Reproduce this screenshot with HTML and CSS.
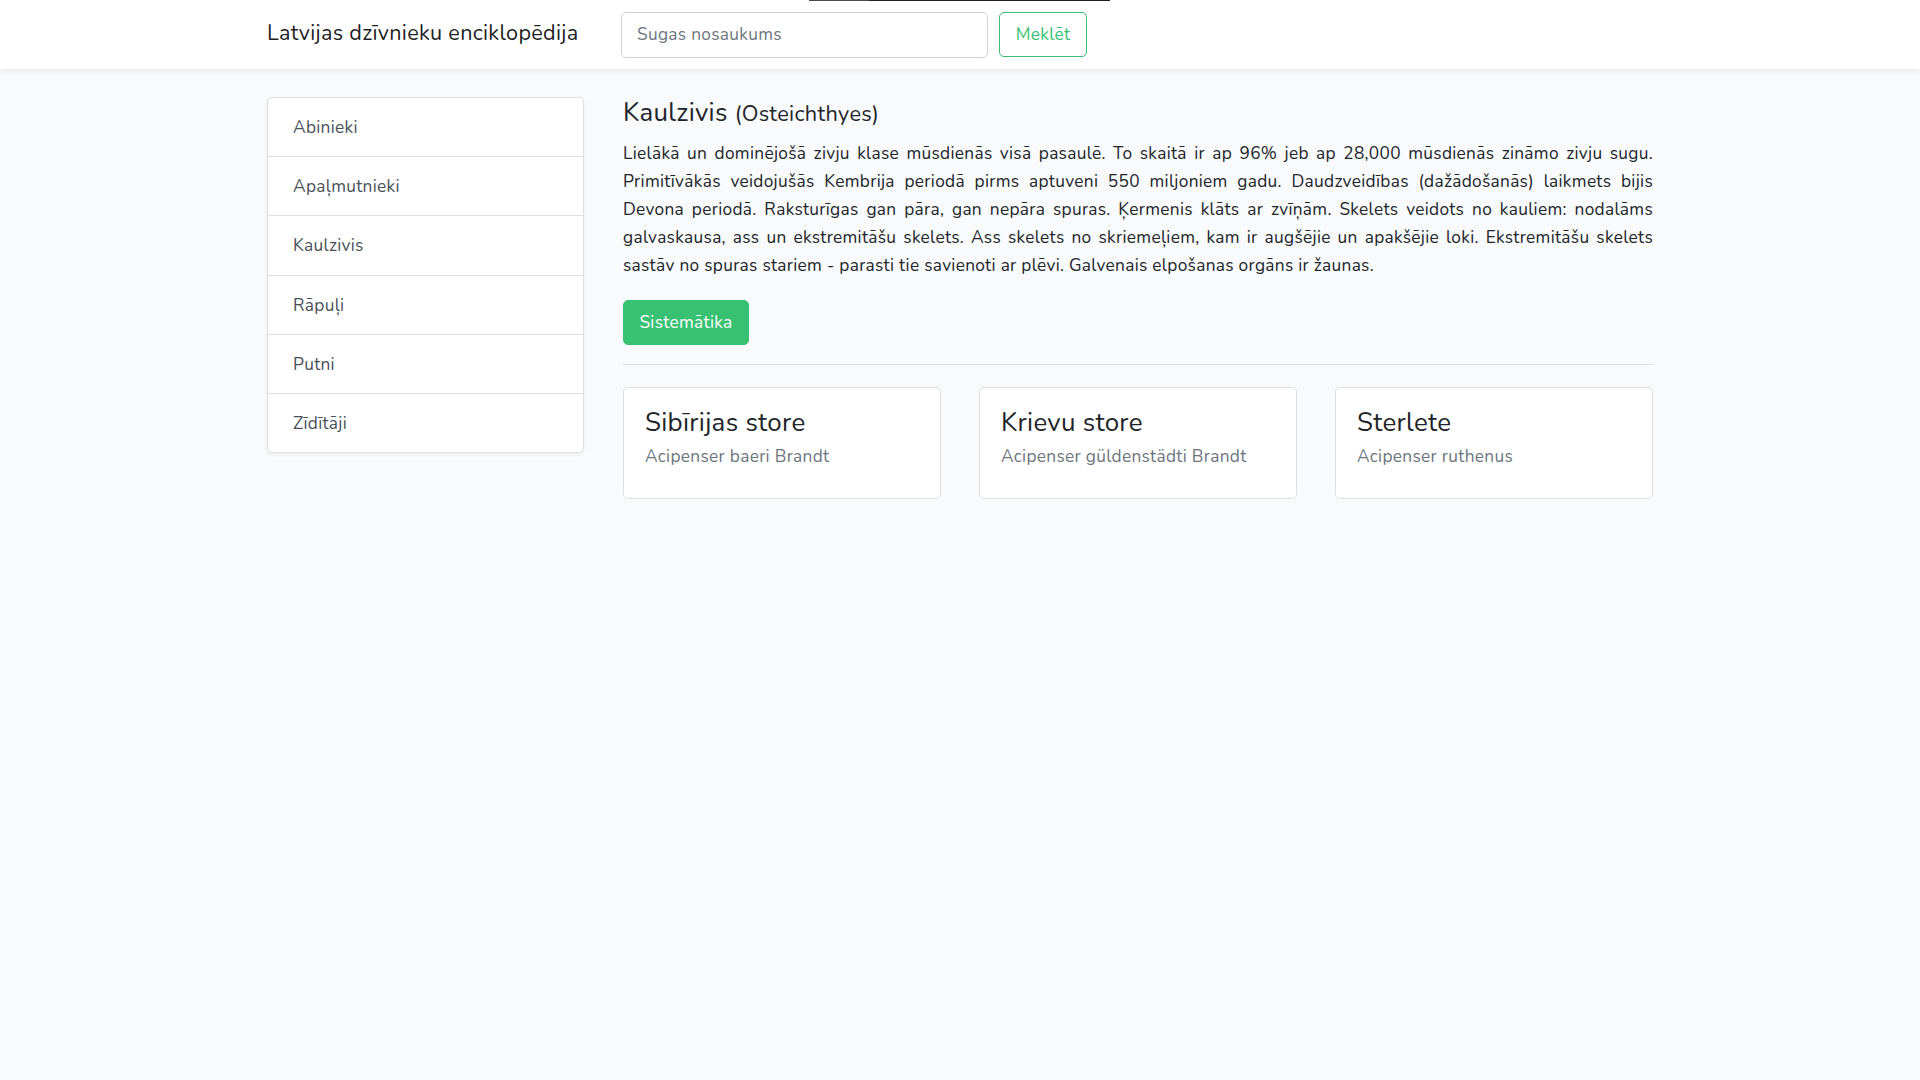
FILE: index.html
```html
<!DOCTYPE html>
<html lang="lv">
<head>
<meta charset="utf-8">
<title>Latvijas dzīvnieku enciklopēdija</title>
<link rel="stylesheet" href="styles.css">
</head>
<body>
<div class="topline"><span class="topline-a"></span><span class="topline-b"></span></div>
<nav class="navbar">
  <div class="nav-inner">
    <a class="brand" href="#">Latvijas dzīvnieku enciklopēdija</a>
    <form class="search">
      <input class="search-input" type="text" placeholder="Sugas nosaukums">
      <button class="btn-outline" type="button">Meklēt</button>
    </form>
  </div>
</nav>
<main class="container">
  <aside class="side-card">
    <a class="side-item" href="#">Abinieki</a>
    <a class="side-item" href="#">Apaļmutnieki</a>
    <a class="side-item" href="#">Kaulzivis</a>
    <a class="side-item" href="#">Rāpuļi</a>
    <a class="side-item" href="#">Putni</a>
    <a class="side-item" href="#">Zīdītāji</a>
  </aside>
  <section class="content">
    <h4 class="title">Kaulzivis <small class="latin">(Osteichthyes)</small></h4>
    <p class="desc">Lielākā un dominējošā zivju klase mūsdienās visā pasaulē. To skaitā ir ap 96% jeb ap 28,000 mūsdienās zināmo zivju sugu. Primitīvākās veidojušās Kembrija periodā pirms aptuveni 550 miljoniem gadu. Daudzveidības (dažādošanās) laikmets bijis Devona periodā. Raksturīgas gan pāra, gan nepāra spuras. Ķermenis klāts ar zvīņām. Skelets veidots no kauliem: nodalāms galvaskausa, ass un ekstremitāšu skelets. Ass skelets no skriemeļiem, kam ir augšējie un apakšējie loki. Ekstremitāšu skelets sastāv no spuras stariem - parasti tie savienoti ar plēvi. Galvenais elpošanas orgāns ir žaunas.</p>
    <a class="btn-success" href="#">Sistemātika</a>
    <hr class="divider">
    <div class="species">
      <div class="sp-card">
        <h4 class="sp-name">Sibīrijas store</h4>
        <p class="sp-latin">Acipenser baeri Brandt</p>
      </div>
      <div class="sp-card">
        <h4 class="sp-name">Krievu store</h4>
        <p class="sp-latin">Acipenser güldenstädti Brandt</p>
      </div>
      <div class="sp-card">
        <h4 class="sp-name">Sterlete</h4>
        <p class="sp-latin">Acipenser ruthenus</p>
      </div>
    </div>
  </section>
</main>
</body>
</html>
```
FILE: styles.css
```css
* { box-sizing: border-box; }
html, body { margin: 0; padding: 0; }
body {
  background: #f8fafc;
  font-family: "Nunito", Lato, "Noto Sans", sans-serif;
  font-size: 17.28px;
  line-height: 27.65px;
  letter-spacing: 0.018em;
  color: #212529;
}
a { text-decoration: none; }

.topline {
  position: absolute;
  top: 0;
  left: 809px;
  width: 301px;
  height: 1px;
  display: flex;
  z-index: 5;
}
.topline-a { width: 60px; background: #4a4a4a; }
.topline-b { flex: 1; background: #1e1e1e; }

.navbar {
  height: 69px;
  background: #fff;
  box-shadow: 0 2px 5px rgba(0,0,0,0.075);
  position: relative;
}
.nav-inner {
  width: 1386px;
  margin: 0 auto;
  height: 100%;
  display: flex;
  align-items: center;
}
.brand {
  flex: 0 0 354px;
  font-size: 21.6px;
  color: rgba(0,0,0,0.9);
  white-space: nowrap;
  padding-bottom: 1px;
}
.search {
  display: flex;
  align-items: center;
  gap: 11px;
  margin: 0;
}
.search-input {
  width: 367px;
  height: 46px;
  border: 1px solid #ced4da;
  border-radius: 5px;
  padding: 0 15px;
  font-family: inherit;
  font-size: 17.28px;
  letter-spacing: 0.018em;
  color: #495057;
  background: #fff;
  outline: none;
}
.search-input::placeholder { color: #6c757d; }
.btn-outline {
  width: 88px;
  height: 45px;
  border: 1px solid #38c172;
  border-radius: 5px;
  background: transparent;
  color: #38c172;
  font-family: inherit;
  font-size: 17.28px;
  letter-spacing: 0.018em;
  padding: 0;
  cursor: pointer;
}

.container {
  width: 1386px;
  margin: 0 auto;
  padding-top: 28px;
  display: grid;
  grid-template-columns: 317px 1030px;
  column-gap: 39px;
  align-items: start;
}

.side-card {
  background: #fff;
  border: 1px solid rgba(0,0,0,0.125);
  border-radius: 5px;
  box-shadow: 0 2px 4px rgba(0,0,0,0.05);
  display: flex;
  flex-direction: column;
  overflow: hidden;
}
.side-item {
  display: block;
  padding: 16px 24px 14px 25px;
  line-height: 28.2px;
  color: #495057;
  border-bottom: 1px solid rgba(0,0,0,0.125);
}
.side-item:last-child { border-bottom: 0; }

.content { min-width: 0; }
.title {
  margin: 0 0 9.6px;
  font-size: 25.9px;
  line-height: 31px;
  font-weight: 400;
  color: #212529;
}
.latin { font-size: 84%; font-weight: 400; }
.desc {
  margin: 0 0 20px;
  line-height: 28px;
  text-align: justify;
}
.btn-success {
  display: inline-block;
  height: 45px;
  padding: 8px 15.4px;
  line-height: 27.65px;
  border: 1px solid #38c172;
  border-radius: 5px;
  background: #38c172;
  color: #fff;
}
.divider {
  margin: 19px 0 22px;
  border: 0;
  border-top: 1px solid rgba(0,0,0,0.1);
  height: 0;
}
.species {
  display: grid;
  grid-template-columns: repeat(3, 1fr);
  column-gap: 38px;
}
.sp-card {
  height: 112px;
  background: #fff;
  border: 1px solid rgba(0,0,0,0.125);
  border-radius: 5px;
  padding: 19px 21px 0;
}
.sp-name {
  margin: 0;
  font-size: 25.9px;
  line-height: 31px;
  font-weight: 400;
  color: #212529;
}
.sp-latin {
  margin: 5px 0 0;
  color: #6c757d;
}
```
